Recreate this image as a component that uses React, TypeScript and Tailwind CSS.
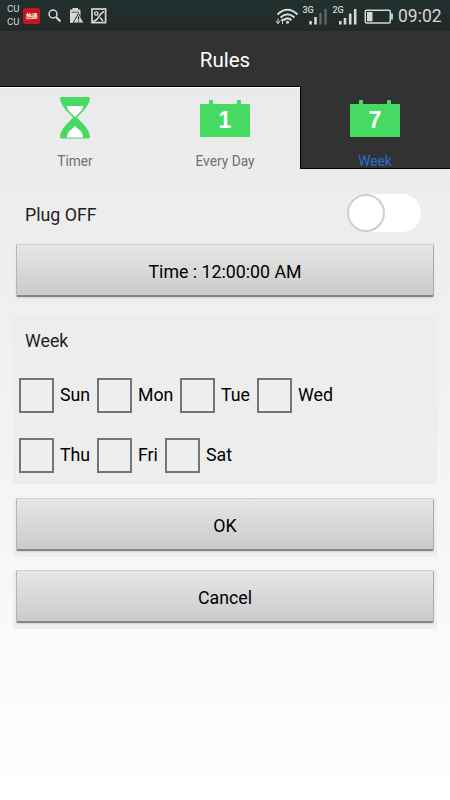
import { useState } from "react";
import clsx from "clsx";

interface Day {
  name: string;
  width: string;
}

const dayRows: Day[][] = [
  [
    { name: "Sun", width: "w-[78px]" },
    { name: "Mon", width: "w-[83px]" },
    { name: "Tue", width: "w-[77px]" },
    { name: "Wed", width: "w-[80px]" },
  ],
  [
    { name: "Thu", width: "w-[78px]" },
    { name: "Fri", width: "w-[68px]" },
    { name: "Sat", width: "w-[80px]" },
  ],
];

function StatusBar() {
  return (
    <div className="flex h-[31px] items-center bg-gradient-to-b from-[#20312f] to-[#232927] text-[#d4d8d6]">
      <div className="-mt-0.5 ml-[7px] w-4 text-[9.5px] leading-[13px]">
        <p>CU</p>
        <p>CU</p>
      </div>
      <div className="flex h-4 w-[17px] items-center justify-center rounded-[2px] bg-[#c4161c] font-['Noto_Sans_CJK_SC',sans-serif] text-[6px] leading-none font-bold tracking-[-0.5px] text-white">
        热通
      </div>
      <svg className="ml-1.5" width="18" height="18" viewBox="0 0 18 18" fill="none" stroke="currentColor">
        <circle cx="7" cy="7" r="4" strokeWidth="1.5" />
        <path d="M10 10L14.4 14.6" strokeWidth="2.2" />
      </svg>
      <svg className="ml-[5px]" width="16" height="18" viewBox="0 0 16 18">
        <path d="M1 3.5Q1 2.5 2 2.5H3.5V1H9V2.5H10.5Q11.5 2.5 11.5 3.5V16H2Q1 16 1 15Z" fill="currentColor" />
        <path d="M2.5 4.5H10V6H2.5Z" fill="#26302e" opacity=".5" />
        <path d="M9.5 6.5L15 16H4Z" fill="currentColor" stroke="#26302e" strokeWidth="1" />
        <path d="M9.5 9.5V12.5M9.5 13.5V14.8" stroke="#26302e" strokeWidth="1.3" />
      </svg>
      <svg className="ml-1.5" width="16" height="16" viewBox="0 0 16 16" fill="none" stroke="currentColor">
        <rect x="1" y="1" width="13.6" height="13.6" strokeWidth="1.7" />
        <circle cx="5.3" cy="5.5" r="1.7" strokeWidth="1.3" />
        <path d="M2 13.5Q6 12.5 7.5 9T13 3.5M9 9.5L12 13" strokeWidth="1.5" />
      </svg>

      <svg className="ml-auto" width="144" height="30" viewBox="273 0 144 30" fill="none" stroke="currentColor">
        <path d="M277.5 13.5Q287.5 4 297.5 13.5" strokeWidth="2" />
        <path d="M280.5 16.5Q287.5 10 294.5 16.5" strokeWidth="2" />
        <path d="M283.5 19.2Q287.5 15.5 291.5 19.2" strokeWidth="2" />
        <circle cx="287.5" cy="21.3" r="1.5" fill="currentColor" stroke="none" />
        <path d="M278 17.5V22.5M276 20L278 22.7L280 20M282.5 23V18M280.8 20L282.5 17.7L284.2 20" strokeWidth="1" />
        <path d="M310.5 20V23.5M315.5 16V23.5" strokeWidth="2.6" />
        <path d="M320.5 12V23.5M325.5 8V23.5" strokeWidth="2.4" opacity=".35" />
        <path d="M340.3 20V23.5M345 17V23.5M350.2 12.5V23.5M355.2 8V23.5" strokeWidth="2.6" />
        <rect x="365.3" y="9.3" width="25" height="12.7" rx="1.5" strokeWidth="1.5" />
        <path d="M367 11H372.5V20.3H367Z" fill="currentColor" stroke="none" />
        <path d="M392 12.5V18.5" strokeWidth="1.8" />
        <text x="302.5" y="11.7" className="text-[9px] font-medium" fill="currentColor" stroke="none">3G</text>
        <text x="332.5" y="11.7" className="text-[9px] font-medium" fill="currentColor" stroke="none">2G</text>
      </svg>
      <p className="-ml-[19px] w-[52px] pt-0.5 text-[17.5px] leading-none">09:02</p>
    </div>
  );
}

function HourglassIcon() {
  return (
    <svg width="30" height="42" viewBox="0 0 30 42">
      <path
        d="M1.5 0H28.5Q30 0 30 1.5C29 9.5 22 15 16.8 20.5C22 26 29 31.5 30 39.5Q30 41.5 28.5 41.5H1.5Q0 41.5 0 39.5C1 31.5 8 26 13.2 20.5C8 15 1 9.5 0 1.5Q0 0 1.5 0Z"
        fill="#46da62"
      />
      <path d="M7 9H23V11Q21 14.5 15 20Q9 14.5 7 11Z" fill="#fff" />
      <path d="M15 29L21 34.5Q23 36.5 23 40.5H7Q7 36.5 9 34.5Z" fill="#fff" />
    </svg>
  );
}

function CalendarIcon({ day }: { day: string }) {
  return (
    <div className="flex flex-col">
      <div className="flex h-1 justify-between px-[9px]">
        <span className="h-1 w-1 rounded-t-[1px] bg-[#46da62]" />
        <span className="h-1 w-1 rounded-t-[1px] bg-[#46da62]" />
      </div>
      <div className="flex h-[33px] w-[50px] items-center justify-center rounded-[1px] bg-[#46da62] font-['Liberation_Sans',sans-serif] text-[23px] leading-none font-bold text-white">
        {day}
      </div>
    </div>
  );
}

interface TabProps {
  label: string;
  active?: boolean;
  children: React.ReactNode;
}

function Tab({ label, active, children }: TabProps) {
  return (
    <button
      className={clsx(
        "flex h-[83px] w-[150px] flex-col items-center",
        active
          ? "-mt-px border-b border-l border-black bg-[#323232] pt-0.5 pr-px text-[#1e72cc]"
          : "border-t border-white text-[#707070]"
      )}
    >
      <div className="flex h-[51px] shrink-0 items-end">{children}</div>
      <span className="mt-3.5 text-[13.75px] leading-4">{label}</span>
    </button>
  );
}

function GradientButton({ children }: { children: React.ReactNode }) {
  return (
    <button className="block h-[53px] w-full rounded-[2px] border border-t-[#cfcfcf] border-r-[#aaa] border-b-2 border-b-[#858585] border-l-[#b5b5b5] bg-gradient-to-b from-[#e6e6e6] to-[#cbcbcb] pt-1 text-[17.75px] text-black shadow-[0_1px_1px_#d5d5d5]">
      {children}
    </button>
  );
}

export default function App() {
  const [isOn, setIsOn] = useState(false);

  return (
    <div className="flex h-[800px] w-[450px] flex-col overflow-hidden bg-white font-[Roboto,sans-serif]">
      <StatusBar />
      <header className="flex h-14 items-center justify-center border-b border-black bg-[#323232] pt-1">
        <h1 className="text-[20.5px] text-white">Rules</h1>
      </header>

      <main className="flex-1 bg-gradient-to-b from-[#eaeaea] via-[#f3f3f3] via-50% to-white">
        <nav className="flex">
          <Tab label="Timer">
            <HourglassIcon />
          </Tab>
          <Tab label="Every Day">
            <div className="pb-0.5">
              <CalendarIcon day="1" />
            </div>
          </Tab>
          <Tab label="Week" active>
            <div className="pb-0.5">
              <CalendarIcon day="7" />
            </div>
          </Tab>
        </nav>

        <section className="mx-[13px] mt-[23px] h-[109px] bg-[#ededed] px-[3px]">
          <div className="flex h-[51px] justify-between pr-[13px] pl-[9px]">
            <p className="pt-2.5 text-[17.75px] leading-6 text-[#222]">Plug OFF</p>
            <button
              onClick={() => setIsOn(!isOn)}
              className={clsx("mt-px flex h-[38px] w-[74px] rounded-full bg-white", isOn && "justify-end")}
            >
              <span className="h-[38px] w-[38px] rounded-full border-2 border-[#cdcdcd] bg-white" />
            </button>
          </div>
          <GradientButton>Time : 12:00:00 AM</GradientButton>
        </section>

        <section className="mx-[13px] mt-[13px] h-[169px] bg-[#ededed] pl-1.5">
          <h2 className="pt-3.5 pl-1.5 text-[17.75px] leading-6 text-[#222]">Week</h2>
          <div className="mt-[25px] flex flex-col gap-[25px]">
            {dayRows.map((row, i) => (
              <div key={i} className="flex h-[35px]">
                {row.map((day) => (
                  <label key={day.name} className={clsx("flex items-center text-[17.75px] text-black", day.width)}>
                    <input
                      type="checkbox"
                      className="mr-1.5 h-[35px] w-[35px] shrink-0 appearance-none border-2 border-[#757575] bg-[#efefef] checked:bg-[#46da62]"
                    />
                    {day.name}
                  </label>
                ))}
              </div>
            ))}
          </div>
        </section>

        <div className="mx-[13px] mt-3.5 h-[59px] bg-[#eeeeee] px-[3px]">
          <GradientButton>OK</GradientButton>
        </div>
        <div className="mx-[13px] mt-[13px] h-[59px] bg-[#efefef] px-[3px]">
          <GradientButton>Cancel</GradientButton>
        </div>
      </main>
    </div>
  );
}
